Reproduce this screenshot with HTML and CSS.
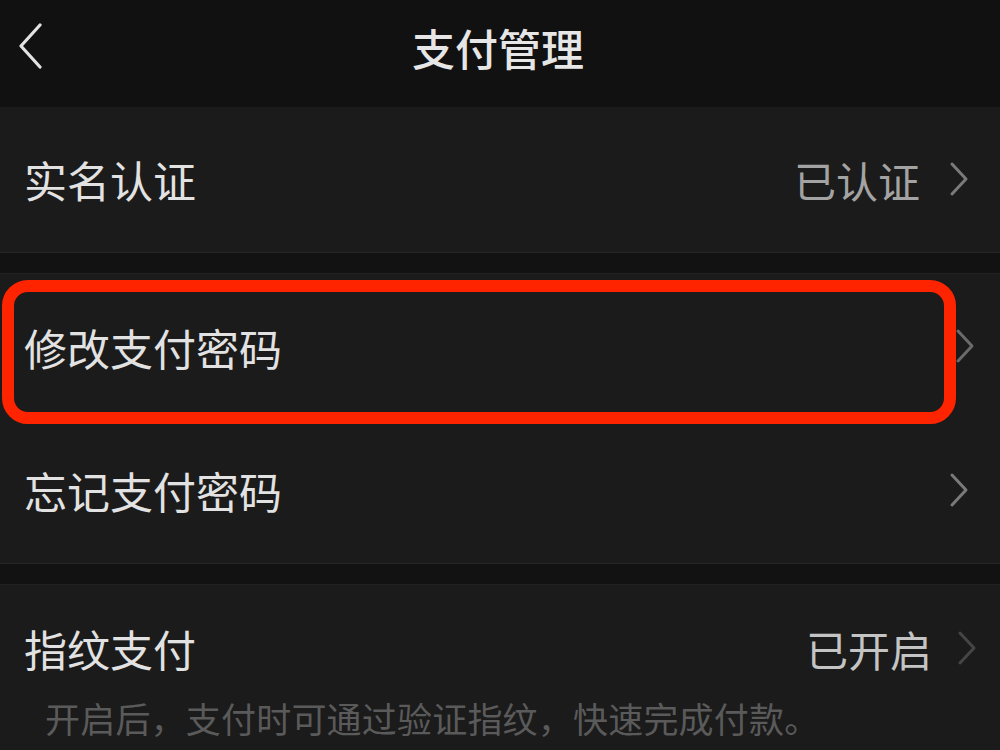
FILE: index.html
```html
<!DOCTYPE html>
<html lang="zh-CN">
<head>
<meta charset="utf-8">
<title>支付管理</title>
<link rel="stylesheet" href="styles.css">
</head>
<body>
<div class="page">
  <header class="topbar">
    <svg class="back" width="30" height="46" viewBox="0 0 30 46"><path d="M24 2 L5 23 L24 44" fill="none" stroke="#e2e2e2" stroke-width="3.2" stroke-linecap="round" stroke-linejoin="round"/></svg>
    <h1 class="title">支付管理</h1>
  </header>

  <section class="group">
    <div class="row">
      <span class="label">实名认证</span>
      <span class="value">已认证</span>
      <svg class="chev" width="22" height="36" viewBox="0 0 22 36"><path d="M4 3 L18 18 L4 33" fill="none" stroke="#7a7a7a" stroke-width="3" stroke-linecap="round" stroke-linejoin="round"/></svg>
    </div>
  </section>

  <div class="gap"></div>

  <section class="group">
    <div class="row row-top">
      <span class="label">修改支付密码</span>
      <svg class="chev chev-faint" width="22" height="36" viewBox="0 0 22 36"><path d="M4 3 L18 18 L4 33" fill="none" stroke="#6a6a6a" stroke-width="3" stroke-linecap="round" stroke-linejoin="round"/></svg>
    </div>
    <div class="row row-bottom">
      <span class="label">忘记支付密码</span>
      <svg class="chev" width="22" height="36" viewBox="0 0 22 36"><path d="M4 3 L18 18 L4 33" fill="none" stroke="#7a7a7a" stroke-width="3" stroke-linecap="round" stroke-linejoin="round"/></svg>
    </div>
    <div class="highlight"></div>
  </section>

  <div class="gap"></div>

  <section class="group group-last">
    <div class="row row-finger">
      <span class="label">指纹支付</span>
      <span class="value value-bright">已开启</span>
      <svg class="chev chev-dim" width="22" height="36" viewBox="0 0 22 36"><path d="M4 3 L18 18 L4 33" fill="none" stroke="#454545" stroke-width="3" stroke-linecap="round" stroke-linejoin="round"/></svg>
    </div>
    <p class="desc">开启后，支付时可通过验证指纹，快速完成付款。</p>
  </section>
</div>
</body>
</html>
```

FILE: styles.css
```css
html, body {
  margin: 0;
  padding: 0;
  background: #111111;
}

body {
  font-family: "Noto Sans CJK SC", "Noto Sans", sans-serif;
  color: #e4e4e4;
  width: 1000px;
  height: 750px;
  overflow: hidden;
}

.page {
  display: flex;
  flex-direction: column;
}

.topbar {
  height: 107px;
  display: flex;
  align-items: center;
  justify-content: center;
  position: relative;
  background: #111111;
}

.back {
  position: absolute;
  left: 16px;
  top: 23px;
}

.title {
  margin: 0;
  font-size: 43px;
  font-weight: 500;
  color: #e6e6e6;
  line-height: 1;
  margin-left: -4px;
  margin-top: -12px;
  letter-spacing: 0;
}

.group {
  background: #1b1b1b;
  position: relative;
}

.gap {
  height: 20px;
  background: #121212;
  border-top: 1px solid #262626;
  border-bottom: 1px solid #222222;
}

.row {
  height: 145px;
  display: flex;
  align-items: center;
  padding: 0 30px 0 24px;
}

.row-top {
  height: 144px;
  padding-top: 2px;
  box-sizing: border-box;
}

.row-bottom {
  height: 145px;
}

.label {
  font-size: 43px;
  color: #e2e2e2;
  line-height: 1;
  flex: 1;
}

.value {
  font-size: 42px;
  color: #a3a3a3;
  line-height: 1;
  margin-right: 28px;
}

.value-bright {
  color: #c4c4c4;
  margin-right: 24px;
}

.chev {
  flex: none;
  margin-top: -2px;
}

.chev-faint {
  margin-right: -6px;
}

.row-finger {
  height: auto;
  padding-top: 42px;
  padding-right: 26px;
}

.chev-dim {
  margin-right: -4px;
}

.desc {
  margin: 0;
  padding: 30px 0 0 45px;
  font-size: 35px;
  line-height: 1;
  color: #5a5a5a;
  letter-spacing: 0.2px;
}

.group-last {
  flex: 1;
  min-height: 200px;
}

.highlight {
  position: absolute;
  left: 2px;
  top: 6px;
  width: 954px;
  height: 144px;
  box-sizing: border-box;
  border: 12px solid #fe2400;
  border-radius: 26px;
  pointer-events: none;
}
```
